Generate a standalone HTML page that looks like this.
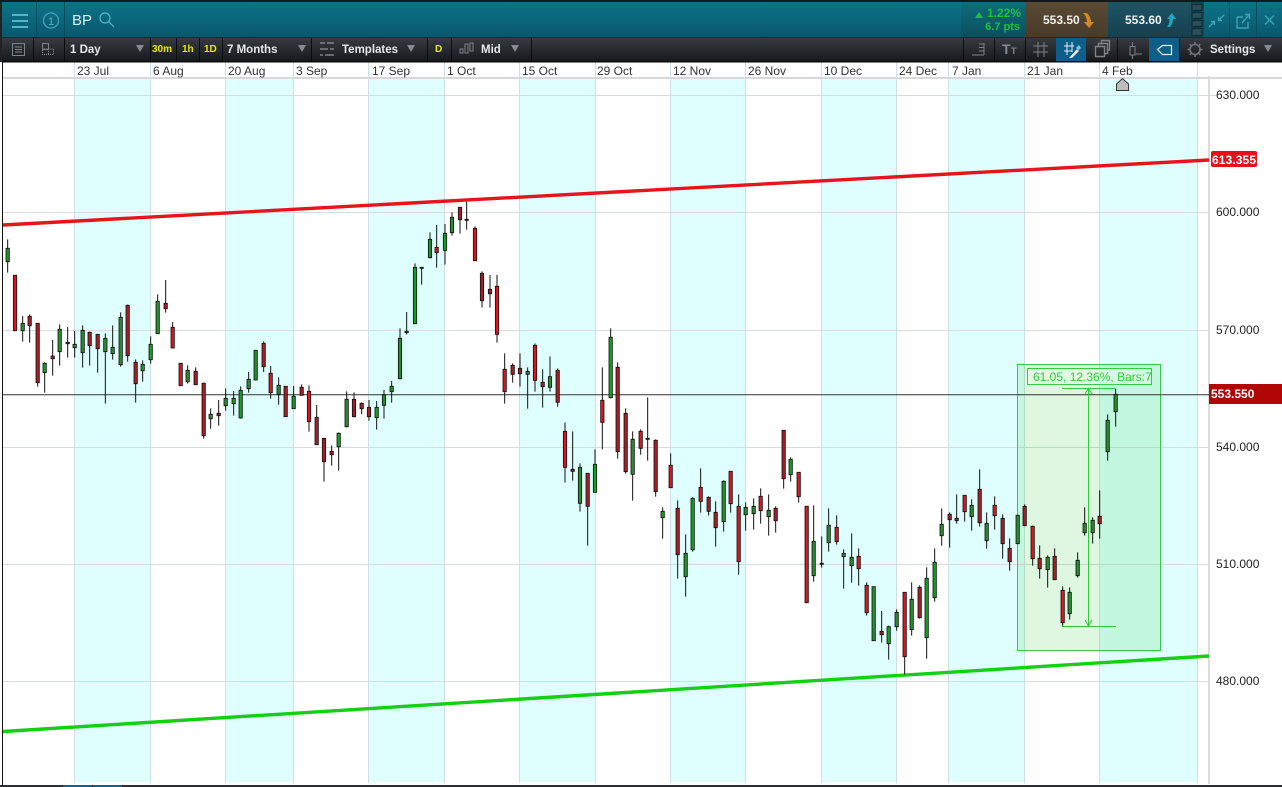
<!DOCTYPE html>
<html><head><meta charset="utf-8"><title>BP Chart</title>
<style>
html,body{margin:0;padding:0;background:#fff;overflow:hidden}
svg{display:block;font-family:"Liberation Sans",Arial,sans-serif}
.w{fill:none;stroke:#111;stroke-width:3}
.b{stroke:#111;stroke-width:2.4}
.R{fill:#e2121c}.D{fill:#a31f27}.G{fill:#0ca41c}.g{fill:#2a8a30}
.d{font-size:12px;fill:#333}
.a{font-size:12px;fill:#222}
.t{font-size:11.5px;font-weight:bold;fill:#e6e8ea}
.y{font-size:10px;font-weight:bold;fill:#e8e800}
.ic{fill:none;stroke:#7d8389;stroke-width:1}
</style></head><body>
<svg width="1282" height="787" viewBox="0 0 1282 787" xmlns="http://www.w3.org/2000/svg">
<defs>
<linearGradient id="hd" x1="0" y1="0" x2="0" y2="1"><stop offset="0" stop-color="#0d7388"/><stop offset="1" stop-color="#09586e"/></linearGradient>
<linearGradient id="tb" x1="0" y1="0" x2="0" y2="1"><stop offset="0" stop-color="#373b41"/><stop offset="1" stop-color="#17191c"/></linearGradient>
<linearGradient id="pc" x1="0" y1="0" x2="0" y2="1"><stop offset="0" stop-color="#0f6c7c"/><stop offset="1" stop-color="#0a4f5e"/></linearGradient>
<linearGradient id="br" x1="0" y1="0" x2="0" y2="1"><stop offset="0" stop-color="#5a4a33"/><stop offset="1" stop-color="#483b2a"/></linearGradient>
<linearGradient id="bl" x1="0" y1="0" x2="0" y2="1"><stop offset="0" stop-color="#1d5565"/><stop offset="1" stop-color="#173f4f"/></linearGradient>
</defs>
<rect width="1282" height="787" fill="#fff"/>

<!-- cyan bands -->
<g fill="#dfffff">
<rect x="75" y="79" width="76" height="703"/><rect x="226" y="79" width="68" height="703"/><rect x="369" y="79" width="76" height="703"/><rect x="520" y="79" width="75" height="703"/><rect x="671" y="79" width="75" height="703"/><rect x="822" y="79" width="75" height="703"/><rect x="949" y="79" width="76" height="703"/><rect x="1100" y="79" width="97" height="703"/>
</g>
<!-- grid -->
<path d="M3 95.5H1216M3 212.5H1209M3 330.5H1209M3 447.5H1209M3 564.5H1209M3 681.5H1209" stroke="#d6dcdc" fill="none"/>
<path d="M74.5 62V783M150.5 62V783M225.5 62V783M293.5 62V783M368.5 62V783M444.5 62V783M519.5 62V783M595.5 62V783M670.5 62V783M745.5 62V783M821.5 62V783M896.5 62V783M948.5 62V783M1024.5 62V783M1099.5 62V783M1197.5 62V783" stroke="#cfdfe2" fill="none"/>
<rect x="3" y="77" width="1279" height="2" fill="#d8d8d8"/>
<rect x="1208" y="76" width="2" height="708" fill="#dcdcdc"/>
<rect x="2" y="62" width="1" height="725" fill="#111"/>

<!-- measure box -->
<rect x="1017.5" y="364.5" width="143" height="286" fill="rgb(40,200,50)" fill-opacity=".15" stroke="#33cc44"/>

<!-- current price line -->
<path d="M3 394.7H1209" stroke="#333" stroke-width="1"/>

<!-- trend lines -->
<path d="M3 225L1209 160" stroke="#e8141c" stroke-width="3.4" fill="none"/>
<path d="M3 731.5L1209 656" stroke="#12d012" stroke-width="3.4" fill="none"/>

<!-- candles 1 -->
<g transform="translate(0 200) scale(.33333)">
<path class="w" d="M23 118V218M68 348V425M89 343V428M113 369V560M134 487V578M158 420V527M179 373V497M203 381V473M224 393V473M248 376V503M269 395V497M293 403V518M316 400V611M338 376V479M362 337V500M383 314V485M407 478V608M428 481V545M452 409V491M473 283V401M497 240V338M518 366V445M563 496V551M587 502V554M611 548V716M632 625V686M656 600V677M677 565V632M701 573V647M722 559V656M746 516V578M767 451V541M791 424V516M812 498V596M836 532V614M857 559V651M881 558V626"/>
<path class="b g" d="M18 145H28V185H18ZM63 370H73V392H63ZM174 388H184V455H174ZM219 433H229V443H219ZM243 391H253V458H243ZM311 415H321V455H311ZM333 442H343V461H333ZM357 352H367V494H357ZM468 304H478V401H468ZM558 511H568V545H558ZM627 643H637V656H627ZM672 595H682V617H672ZM696 595H706V611H696ZM741 538H751V566H741ZM762 451H772V540H762ZM831 556H841V583H831ZM876 589H886V626H876Z"/>
<path class="b G" d="M129 490H139V518H129ZM423 493H433V512H423ZM447 433H457V479H447ZM717 571H727V654H717Z"/>
<path class="b R" d="M40 226H50V392H40ZM513 382H523V444H513ZM537 490H547V557H537ZM807 520H817V578H807Z"/>
<path class="b D" d="M84 349H94V377H84ZM108 370H118V548H108ZM153 468H163V476H153ZM264 397H274V437H264ZM288 403H298V446H288ZM378 316H388V467H378ZM402 487H412V551H402ZM492 310H502V326H492ZM582 514H592V554H582ZM606 550H616V707H606ZM786 430H796V500H786ZM852 559H862V650H852ZM198 427H208V431H198ZM651 640H661V647H651Z"/>
</g>

<!-- candles 2 -->
<g transform="translate(300 190) scale(.33333)">
<path class="w" d="M5 583V617M27 586V725M50 645V764M72 745V875M95 766V827M116 727V842M140 604V712M162 607V682M185 637V673M207 630V692M230 633V719M252 600V686M275 573V638M300 415V568M320 366V433M345 220V401M365 232V284M390 127V205M410 105V233M435 102V224M456 67V137M480 52V131M500 35V119M525 109V212M546 244V353M570 255V353M591 255V458M614 490V641M638 520V578M660 490V590M683 532V656M705 460V605M728 538V653M750 499V605M773 535V650M795 697V878M818 724V872M840 820V965M863 850V1067M885 778V908"/>
<path class="b g" d="M135 628H145V710H135ZM247 614H257V646H247ZM270 589H280V605H270ZM295 445H305V566H295ZM385 148H395V203H385ZM451 82H461V128H451ZM678 544H688V553H678ZM745 560H755V592H745ZM835 832H845V940H835Z"/>
<path class="b G" d="M111 730H121V770H111ZM225 652H235V683H225ZM340 232H350V401H340ZM430 130H440V181H430ZM880 823H890V907H880ZM315 424H325V428H315ZM360 232H370V235H360ZM495 88H505V91H495Z"/>
<path class="b R" d="M22 604H32V695H22ZM405 172H415V188H405ZM520 115H530V212H520ZM586 289H596V433H586ZM609 538H619V605H609ZM700 466H710V571H700ZM790 724H800V832H790Z"/>
<path class="b D" d="M0 592H10V616H0ZM45 682H55V764H45ZM67 745H77V815H67ZM90 784H100V794H90ZM157 628H167V680H157ZM180 640H190V656H180ZM202 652H212V680H202ZM475 52H485V89H475ZM541 250H551V332H541ZM565 298H575V311H565ZM633 526H643V553H633ZM655 535H665V551H655ZM723 577H733V590H723ZM768 541H778V637H768ZM813 838H823V844H813ZM858 850H868V949H858Z"/>
</g>

<!-- candles 3 -->
<g transform="translate(560 320) scale(.33333)">
<path class="w" d="M127 142V388M152 25V235M173 127V416M197 265V461M218 334V542M242 328V404M263 232V422M287 358V530M308 562V656M332 400V503M353 541V776M377 643V830M398 532V695M422 445V578M446 529V587M467 544V680M491 481V635M512 454V578M536 523V764M557 547V632M581 535V629M602 505V611M626 523V647M647 559V638M671 331V506M692 412V485M716 457V548M740 559V848M761 556V785M785 649V743M806 565V695M830 586V674M851 688V806M875 640V788"/>
<path class="b g" d="M213 358H223V463H213ZM372 700H382V770H372ZM486 484H496V605H486ZM552 562H562V584H552ZM576 559H586V581H576ZM621 571H631V590H621ZM756 664H766V767H756ZM801 616H811V668H801ZM846 700H856V710H846ZM870 712H880V737H870Z"/>
<path class="b G" d="M147 52H157V233H147ZM303 574H313V593H303ZM393 535H403V689H393ZM687 418H697V464H687ZM258 355H268V358H258ZM780 730H790V733H780Z"/>
<path class="b R" d="M122 241H132V307H122ZM237 334H247V385H237ZM327 436H337V503H327ZM417 502H427V544H417ZM507 454H517V551H507ZM531 559H541V725H531ZM597 529H607V572H597ZM711 457H721V530H711ZM735 559H745V848H735ZM825 622H835V665H825Z"/>
<path class="b D" d="M168 142H178V395H168ZM192 280H202V455H192ZM282 361H292V515H282ZM348 565H358V704H348ZM441 532H451V574H441ZM462 577H472V623H462ZM642 565H652V602H642ZM666 331H676V476H666Z"/>
</g>

<!-- candles 4 -->
<g transform="translate(850 350) scale(.33333)">
<path class="w" d="M26 595V707M50 697V797M71 710V872M95 783V878M116 827V929M140 778V842M164 727V973M185 697V857M209 706V806M230 652V926M254 595V755M275 475V587M299 487V593M320 433V521M344 436V515M365 448V542M389 358V530M410 487V596M434 439V539M458 493V626M479 565V662M503 496V581M524 463V527M548 527V647M569 586V686M593 616V713M614 595V689M638 709V830M659 712V809M683 607V683M704 472V557M728 502V581M749 421V566M773 193V332M797 117V230"/>
<path class="b g" d="M66 710H76V872H66ZM135 787H145V830H135ZM180 748H190V839H180ZM270 523H280V557H270ZM360 466H370V500H360ZM405 520H415V572H405ZM498 496H508V581H498ZM588 622H598V659H588ZM654 727H664V791H654ZM678 631H688V677H678ZM699 520H709V548H699ZM723 511H733V548H723ZM768 211H778V305H768ZM792 133H802V185H792Z"/>
<path class="b G" d="M111 830H121V881H111ZM225 685H235V863H225ZM249 637H259V743H249Z"/>
<path class="b R" d="M21 619H31V656H21ZM45 706H55V788H45ZM159 727H169V920H159ZM339 436H349V485H339ZM429 466H439V497H429ZM633 721H643V818H633ZM543 529H553V626H543Z"/>
<path class="b D" d="M90 844H100V854H90ZM204 712H214V803H204ZM294 493H304V509H294ZM315 505H325V512H315ZM384 418H394V518H384ZM453 505H463V581H453ZM474 595H484V635H474ZM519 469H529V527H519ZM564 625H574V656H564ZM609 619H619V689H609ZM744 499H754V521H744Z"/>
</g>

<!-- measure annotation -->
<path d="M1062 388.5H1116M1062 626.5H1116M1088.5 388V626M1085 394L1088.5 388.5L1092 394M1085 620L1088.5 626L1092 620" stroke="#2ecc3c" fill="none"/>
<rect x="1027.5" y="368.5" width="124" height="16" fill="#e4fae0" fill-opacity=".55" stroke="#33cc44"/>
<text x="1033" y="381" font-size="12" fill="#2ccf3e">61.05, 12.36%, Bars:7</text>

<!-- Y axis -->
<text class="a" x="1216" y="99">630.000</text>
<text class="a" x="1216" y="216">600.000</text>
<text class="a" x="1216" y="334">570.000</text>
<text class="a" x="1216" y="451">540.000</text>
<text class="a" x="1216" y="568">510.000</text>
<text class="a" x="1216" y="685">480.000</text>
<rect x="1211" y="151" width="46" height="16" rx="2" fill="#e4101a"/>
<text x="1212" y="164" font-size="12" fill="#fff" font-weight="bold" textLength="44">613.355</text>
<rect x="1209" y="384" width="73" height="20" fill="#b00606"/>
<text x="1211" y="398" font-size="12" fill="#fff" font-weight="bold">553.550</text>

<!-- date row -->
<text class="d" x="77" y="75">23 Jul</text>
<text class="d" x="153" y="75">6 Aug</text>
<text class="d" x="228" y="75">20 Aug</text>
<text class="d" x="296" y="75">3 Sep</text>
<text class="d" x="372" y="75">17 Sep</text>
<text class="d" x="447" y="75">1 Oct</text>
<text class="d" x="522" y="75">15 Oct</text>
<text class="d" x="597" y="75">29 Oct</text>
<text class="d" x="673" y="75">12 Nov</text>
<text class="d" x="748" y="75">26 Nov</text>
<text class="d" x="824" y="75">10 Dec</text>
<text class="d" x="899" y="75">24 Dec</text>
<text class="d" x="952" y="75">7 Jan</text>
<text class="d" x="1027" y="75">21 Jan</text>
<text class="d" x="1102" y="75">4 Feb</text>
<path d="M1116.5 84L1122.5 78.5L1128.5 84V90.5H1116.5Z" fill="#bdbdbd" stroke="#333"/>

<!-- bottom bar -->
<rect y="785" width="1282" height="2" fill="#2a2e33"/>
<rect x="63" y="785" width="29" height="2" fill="#0b6480"/><rect x="93" y="785" width="29" height="2" fill="#0b6480"/>

<!-- header -->
<rect width="1282" height="2" fill="#15191c"/>
<rect x="2" y="2" width="1280" height="35" fill="url(#hd)"/>
<rect y="2" width="2" height="60" fill="#222"/>
<path d="M36.5 2V37M64.5 2V37" stroke="#0a4c60"/>
<path d="M12 15H28M12 21H28M12 27H28" stroke="#52b8c6" stroke-width="2"/>
<circle cx="51" cy="20.5" r="7.5" fill="none" stroke="#3fa4b8" stroke-width="1.3"/>
<text x="51" y="25" font-size="11" fill="#4fb4c6" text-anchor="middle">1</text>
<text x="72" y="25" font-size="15" fill="#d6f0f4">BP</text>
<circle cx="105" cy="18" r="5" fill="none" stroke="#58b4c4" stroke-width="1.2"/>
<path d="M108.5 21.5L114 27" stroke="#58b4c4" stroke-width="1.2"/>

<!-- price cells -->
<rect x="961" y="2" width="65" height="35" fill="url(#pc)"/>
<path d="M975 18L979 12L983 18Z" fill="#1fc03a"/>
<text x="1021" y="17" font-size="12" font-weight="bold" fill="#1fc03a" text-anchor="end">1.22%</text>
<text x="1020" y="30" font-size="11" font-weight="bold" fill="#1fc03a" text-anchor="end">6.7 pts</text>
<rect x="1026" y="2" width="82" height="35" fill="url(#br)"/>
<text x="1043" y="24" font-size="12" font-weight="bold" fill="#f4f2ee">553.50</text>
<path d="M1083 13H1087C1090 16 1091 19 1091 22H1094L1089 28L1084 22H1087C1087 19 1086 16 1083 13Z" fill="#d08a26"/>
<rect x="1108" y="2" width="83" height="35" fill="url(#bl)"/>
<text x="1125" y="24" font-size="12" font-weight="bold" fill="#eef4f6">553.60</text>
<path d="M1167 27H1170C1172 25 1173 21 1173 19H1176L1172 13L1167 19H1169.5C1169.5 22 1169 25 1167 27Z" fill="#22a6bc"/>
<rect x="1191" y="2" width="12" height="35" fill="#17424f"/>
<path d="M1192 4.5H1202V10.5H1192ZM1192 12.5H1202V18.5H1192ZM1192 20.5H1202V26.5H1192ZM1192 28.5H1202V35.5H1192Z" fill="#2a4f5a" stroke="#0c2a34"/>
<path d="M1203.5 2V37M1229.5 2V37M1256.5 2V37" stroke="#0a4c60"/>
<g stroke="#3ca4b4" stroke-width="1.4" fill="none">
<path d="M1209 27L1214 22M1211 21.5H1214.5V25M1224 15L1219 20M1222 20.5H1218.5V17"/>
<path d="M1237 17H1243M1237 17V28H1248V22M1242 23L1249 15M1245 14.5H1249.5V19"/>
<path d="M1265 15.5L1274 24.5M1274 15.5L1265 24.5"/>
</g>

<!-- toolbar -->
<rect x="2" y="37" width="1280" height="1" fill="#0a2e3a"/>
<rect x="2" y="38" width="1280" height="23" fill="url(#tb)"/>
<rect x="2" y="61" width="1280" height="1.5" fill="#0a0a0a"/>
<path d="M33.5 38V61M64.5 38V61M150.5 38V61M176.5 38V61M199.5 38V61M222.5 38V61M311.5 38V61M427.5 38V61M451.5 38V61M531.5 38V61M963.5 38V61M994.5 38V61M1025.5 38V61M1117.5 38V61M1149.5 38V61M1179.5 38V61" stroke="#0b0c0e"/>
<rect x="12.5" y="43.5" width="12" height="12" class="ic"/>
<path d="M15 47H22M15 49.5H22M15 52H22" class="ic"/>
<path d="M42.5 49V43.5H48.5V49H53.5V54.5H42.5V49H48.5V54.5" fill="none" stroke="#8a9096" stroke-dasharray="1 1"/>
<rect x="42.5" y="43.5" width="6" height="6" class="ic"/>

<text class="t" x="70" y="53">1 Day</text>
<path d="M136 45H144L140 52Z" fill="#858b92"/>
<text class="y" x="152" y="52">30m</text>
<text class="y" x="182" y="52">1h</text>
<text class="y" x="204" y="52">1D</text>
<text class="t" x="227" y="53">7 Months</text>
<path d="M298 45H306L302 52Z" fill="#858b92"/>
<path d="M320 43H325M327 43H334M320 49H328M330 49H334M320 55H323M325 55H334" stroke="#7d8389" stroke-width="1.4"/>
<text class="t" x="342" y="53">Templates</text>
<path d="M407 45H415L411 52Z" fill="#858b92"/>
<text class="y" x="435" y="52">D</text>
<path d="M460 53H463V49H460ZM465 53H468V44H465ZM470 51H473V43H470Z" class="ic"/>
<text class="t" x="481" y="53">Mid</text>
<path d="M511 45H519L515 52Z" fill="#858b92"/>

<rect x="1056" y="38" width="30" height="23" fill="#0d5f8a"/>
<rect x="1149" y="38" width="30" height="23" fill="#0d5f8a"/>
<!-- right toolbar icons -->
<path d="M972 55H984M984 43V55M979 44H984M979 47.5H984M979 51H984" class="ic"/>
<text x="1002" y="54" font-size="14" font-weight="bold" fill="#858b92">T</text>
<text x="1011" y="54" font-size="9" font-weight="bold" fill="#858b92">T</text>
<path d="M1033 46H1048M1033 52H1048M1038 42V57M1044 42V57" class="ic"/>
<path d="M1064 46H1074M1064 51H1072M1067 42V55M1072 42V52" stroke="#e6eef2" fill="none"/>
<path d="M1069 58L1077 49L1079 51L1072 58Z" fill="#e6eef2"/><path d="M1076 48L1079 45L1081 48L1079 50Z" fill="#7fc4e6"/>
<path d="M1095.5 46.5H1104.5V56.5H1095.5ZM1098.5 46V43.5H1107.5V53.5H1105M1101.5 43V40.5H1109.5V50H1108" fill="none" stroke="#7d8389" stroke-width="1.4"/>
<path d="M1132.5 42V46M1132.5 55V59M1130 46.5H1135V55H1130ZM1136 54H1142" class="ic"/>
<path d="M1157.5 49.5L1162.5 45.5H1171.5V54.5H1162.5Z" fill="none" stroke="#e6eef2" stroke-width="1.2"/>
<circle cx="1195" cy="49.5" r="5" fill="none" stroke="#6f747a" stroke-width="1.6"/>
<path d="M1195 42V45M1195 54V57M1187.5 49.5H1190.5M1199.5 49.5H1202.5M1189.7 44.2L1191.8 46.3M1198.2 52.7L1200.3 54.8M1200.3 44.2L1198.2 46.3M1191.8 52.7L1189.7 54.8" stroke="#6f747a" stroke-width="1.6"/>
<text class="t" x="1210" y="53">Settings</text>
<path d="M1264 45H1272L1268 52Z" fill="#858b92"/>
</svg>
</body></html>
